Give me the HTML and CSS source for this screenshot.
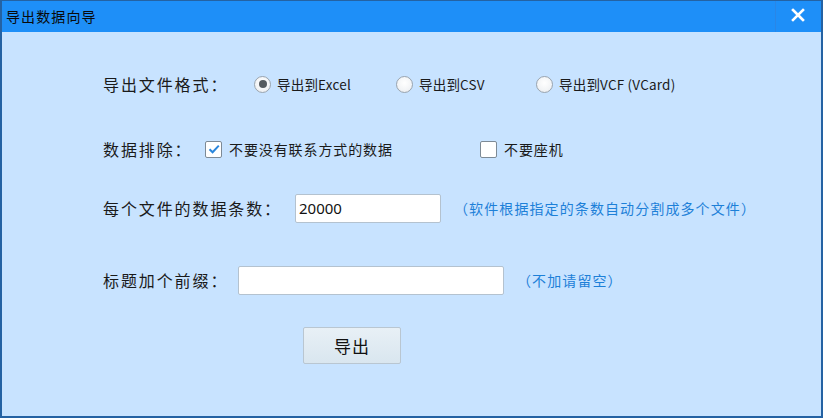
FILE: index.html
```html
<!DOCTYPE html>
<html lang="zh-CN">
<head>
<meta charset="utf-8">
<title>导出数据向导</title>
<link rel="stylesheet" href="styles.css">
</head>
<body>
<div class="window">
  <div class="titlebar">
    <span class="title">导出数据向导</span>
    <div class="close">
      <svg width="14" height="14" viewBox="0 0 14 14"><path d="M2 2 L12 12 M12 2 L2 12" stroke="#fff" stroke-width="2.6" stroke-linecap="square" fill="none"/></svg>
    </div>
  </div>
  <div class="content">
    <div class="row row-format">
      <span class="label label-format">导出文件格式：</span>
      <label class="opt opt-1"><span class="radio checked"></span><span class="opt-text">导出到Excel</span></label>
      <label class="opt opt-2"><span class="radio"></span><span class="opt-text">导出到CSV</span></label>
      <label class="opt"><span class="radio"></span><span class="opt-text">导出到VCF (VCard)</span></label>
    </div>
    <div class="row row-exclude">
      <span class="label label-exclude">数据排除：</span>
      <label class="chk chk-1"><span class="box checked"><svg width="14" height="14" viewBox="0 0 14 14"><path d="M2.5 7.2 L5.6 10.3 L11.8 3.6" stroke="#2a86dc" stroke-width="2" fill="none"/></svg></span><span class="chk-text">不要没有联系方式的数据</span></label>
      <label class="chk"><span class="box"></span><span class="chk-text">不要座机</span></label>
    </div>
    <div class="row row-count">
      <span class="label label-count">每个文件的数据条数：</span>
      <div class="input input-count">20000</div>
      <span class="note">（软件根据指定的条数自动分割成多个文件）</span>
    </div>
    <div class="row row-prefix">
      <span class="label label-prefix">标题加个前缀：</span>
      <div class="input input-prefix"></div>
      <span class="note">（不加请留空）</span>
    </div>
    <div class="row row-button">
      <button class="btn">导出</button>
    </div>
  </div>
</div>
</body>
</html>
```

FILE: styles.css
```css
* { box-sizing: border-box; }
html, body { margin: 0; padding: 0; }
body {
  width: 823px;
  height: 418px;
  font-family: "Noto Sans CJK SC", "Noto Sans", sans-serif;
  color: #1a1a1a;
  overflow: hidden;
}
.window {
  width: 823px;
  height: 418px;
  border: 2px solid #2462a3;
  border-top-width: 1px;
  background: #c8e3ff;
  display: flex;
  flex-direction: column;
}
.titlebar {
  height: 31px;
  background: #1e8ff8;
  display: flex;
  align-items: center;
  justify-content: space-between;
  flex: none;
}
.title {
  font-size: 14px;
  letter-spacing: 1.1px;
  color: #0a0a0a;
  padding-left: 4px;
  line-height: 1;
  margin-top: -2px;
}
.close {
  width: 45px;
  height: 100%;
  border-left: 1px solid #2a86e6;
  display: flex;
  align-items: center;
  justify-content: center;
  padding-bottom: 4px;
  margin-right: 1px;
}
.content {
  flex: 1;
  padding-left: 101px;
  padding-top: 37px;
  display: flex;
  flex-direction: column;
}
.row {
  display: flex;
  align-items: center;
  height: 30px;
}
.row-exclude { margin-top: 35px; }
.row-count { margin-top: 29px; }
.row-prefix { margin-top: 42px; }
.row-button { margin-top: 32px; height: 37px; padding-left: 200px; }

.label {
  font-size: 16px;
  letter-spacing: 1.9px;
  color: #1a1a1a;
  white-space: nowrap;
  flex: none;
}
.label-format { width: 151px; }
.label-exclude { width: 102px; }
.label-count { width: 192px; }
.label-prefix { width: 135px; }

.opt {
  display: flex;
  align-items: center;
  flex: none;
}
.opt-1 { width: 142px; }
.opt-2 { width: 140px; }
.radio {
  width: 17px;
  height: 17px;
  border-radius: 50%;
  border: 1px solid #9aa4ae;
  background: radial-gradient(circle at 50% 40%, #ffffff 0%, #f2f4f6 60%, #e2e6ea 100%);
  display: flex;
  align-items: center;
  justify-content: center;
  flex: none;
}
.radio.checked::after {
  content: "";
  width: 8px;
  height: 8px;
  border-radius: 50%;
  background: #555b60;
}
.opt-text {
  font-size: 13.5px;
  letter-spacing: 0.2px;
  margin-left: 6px;
  color: #1a1a1a;
  white-space: nowrap;
}

.chk {
  display: flex;
  align-items: center;
  flex: none;
}
.chk-1 { width: 275px; }
.box {
  width: 17px;
  height: 17px;
  border: 1px solid #7d8a96;
  border-radius: 2px;
  background: #ffffff;
  display: flex;
  align-items: center;
  justify-content: center;
  flex: none;
}
.chk-text {
  font-size: 14px;
  letter-spacing: 0.9px;
  margin-left: 7px;
  color: #1a1a1a;
  white-space: nowrap;
}

.input {
  height: 29px;
  background: #ffffff;
  border: 1px solid #b4c2cf;
  border-radius: 2px;
  font-family: "Noto Sans", sans-serif;
  font-size: 15px;
  color: #111;
  padding-left: 3px;
  display: flex;
  align-items: center;
  flex: none;
}
.input-count { width: 146px; }
.input-prefix { width: 266px; }
.note {
  font-size: 14px;
  letter-spacing: 1.1px;
  color: #1d80d8;
  margin-left: 13px;
  white-space: nowrap;
}

.btn {
  width: 98px;
  height: 37px;
  border: 1px solid #b9c6d1;
  border-radius: 2px;
  background: linear-gradient(#e8f0f6, #d9e6ef);
  font-family: "Noto Sans CJK SC", sans-serif;
  font-size: 17px;
  letter-spacing: 1px;
  color: #111;
  padding: 0;
}
```
